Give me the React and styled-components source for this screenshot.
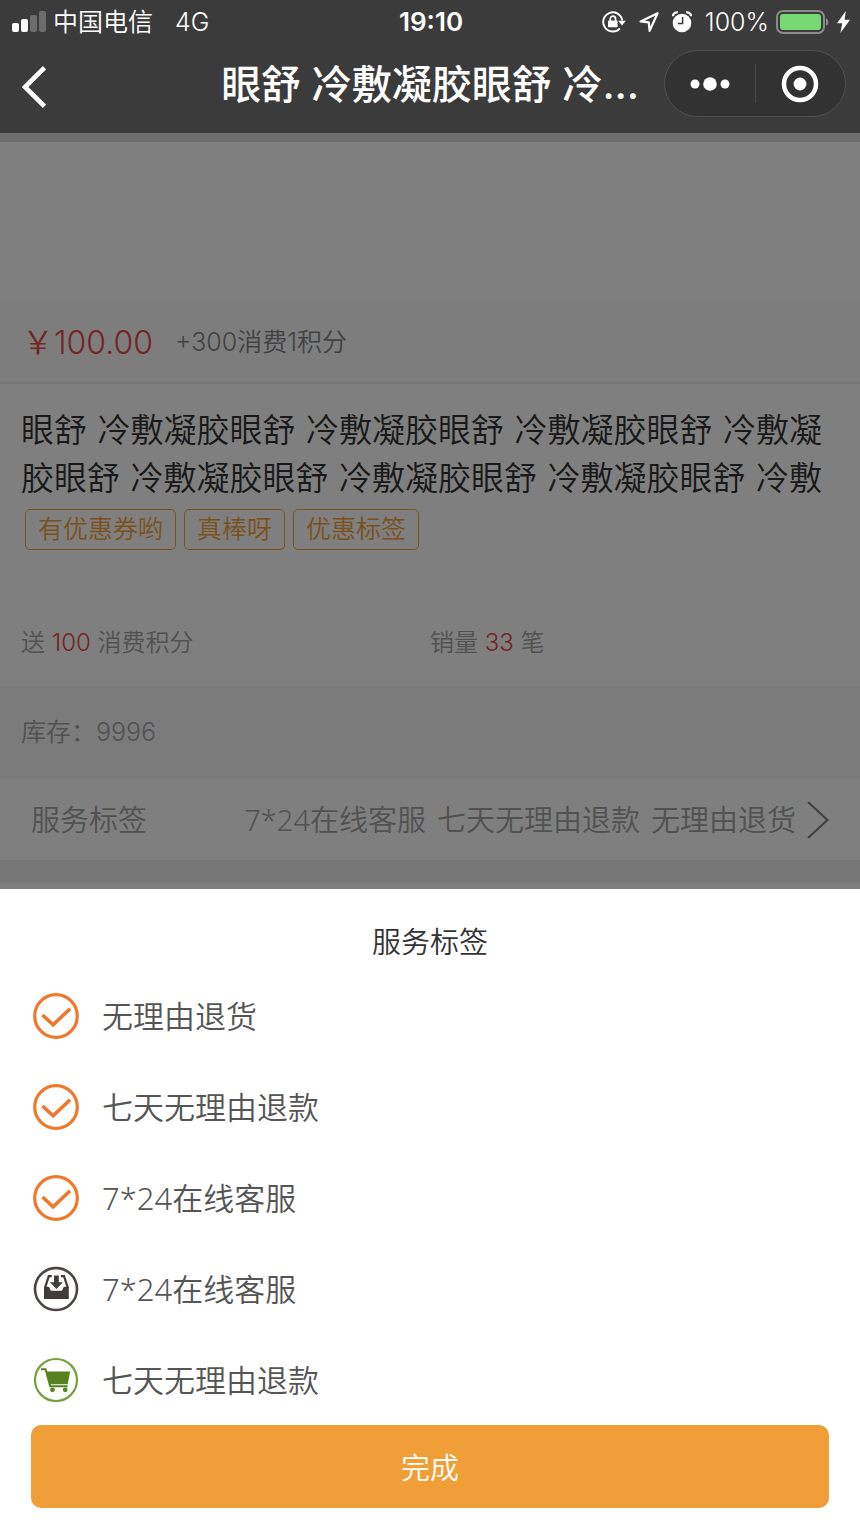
import React, { useState } from "react";
import styled, { createGlobalStyle } from "styled-components";

const productName = "眼舒 冷敷凝胶眼舒 冷敷凝胶眼舒 冷敷凝胶眼舒 冷敷凝胶眼舒 冷敷凝胶眼舒 冷敷凝胶眼舒 冷敷凝胶眼舒 冷敷";
const tags = ["有优惠券哟", "真棒呀", "优惠标签"];
const services = [
  { id: 1, icon: "check", text: "无理由退货" },
  { id: 2, icon: "check", text: "七天无理由退款" },
  { id: 3, icon: "check", text: "7*24在线客服" },
  { id: 4, icon: "inbox", text: "7*24在线客服" },
  { id: 5, icon: "cart", text: "七天无理由退款" },
];

const SignalIcon = () => (
  <svg width="34" height="22" viewBox="0 0 34 22" fill="#fff">
    <rect x="0" y="12" width="7" height="9" rx="2" />
    <rect x="9" y="8" width="7" height="13" rx="2" />
    <rect x="18" y="4" width="7" height="17" rx="2" opacity="0.25" />
    <rect x="27" y="0" width="7" height="21" rx="2" opacity="0.25" />
  </svg>
);

const LockIcon = () => (
  <svg width="24" height="22" viewBox="0 0 24 22" fill="none">
    <path d="M20.3 9.5A9.6 9.6 0 1 0 18 17.3" stroke="#fff" strokeWidth="1.9" />
    <path d="M16.2 9.8h7.6l-3.8 4.600z" fill="#fff" />
    <rect x="6" y="9.6" width="9.6" height="6.6" rx="0.8" fill="#fff" />
    <path d="M8.200 10V7.900a2.700 2.700 0 0 1 5.400 0V10" stroke="#fff" strokeWidth="1.7" />
  </svg>
);

const LocationIcon = () => (
  <svg width="20" height="20" viewBox="0 0 20 20" fill="none">
    <path
      d="M18.600 1.200L1.600 9.400l8.200 1 .8 8.400z"
      stroke="#fff"
      strokeWidth="2.200"
      strokeLinejoin="round"
    />
  </svg>
);

const AlarmIcon = () => (
  <svg width="20" height="22" viewBox="0 0 20 22">
    <circle cx="10" cy="12" r="9.3" fill="#fff" />
    <path
      d="M0.900 5.200A4 4 0 0 1 5.800 1.400M19.100 5.200A4 4 0 0 0 14.200 1.400"
      stroke="#fff"
      strokeWidth="2.200"
      fill="none"
    />
    <path d="M10.600 6v6.600H5.800" stroke="#3b3b3b" strokeWidth="1.500" fill="none" />
  </svg>
);

const BatteryIcon = () => (
  <svg width="54" height="24" viewBox="0 0 54 24">
    <rect x="1" y="1" width="47" height="22" rx="6" fill="none" stroke="#8b8b8b" strokeWidth="2" />
    <rect x="4" y="4" width="41" height="16" rx="3" fill="#78d873" />
    <path d="M50 8.200c3 1 3 6.600 0 7.600z" fill="#8b8b8b" />
  </svg>
);

const BoltIcon = () => (
  <svg width="13" height="22" viewBox="0 0 13 22" fill="#fff">
    <path d="M8.800 0L0 12.200h5.200L3.400 22 13 8.800H7.600z" />
  </svg>
);

const CheckIcon = () => (
  <svg width="46" height="46" viewBox="0 0 46 46" fill="none" stroke="#f0782c">
    <circle cx="23" cy="23" r="21.300" strokeWidth="3.200" />
    <path d="M9.500 22l10.600 9.800 17-16" strokeWidth="3.600" />
  </svg>
);

const InboxIcon = () => (
  <svg width="46" height="46" viewBox="0 0 46 46" fill="none">
    <circle cx="23" cy="23" r="21" stroke="#4b4442" strokeWidth="2.600" />
    <path
      d="M12 21.800L15.800 10.200h3M34.800 21.800L31 10.200h-3"
      stroke="#413b39"
      strokeWidth="2.200"
    />
    <path
      d="M11 20.800h4.200c1 0 1.300 1.200 2 2.600.5 1 1 1.400 2 1.400h8.400c1 0 1.500-.4 2-1.400.7-1.400 1-2.600 2-2.600h4.200V33H11z"
      fill="#413b39"
    />
    <path d="M21 9.500h4.800v6.700h4L23.400 23 17 16.200h4z" fill="#413b39" />
  </svg>
);

const CartIcon = () => (
  <svg width="46" height="46" viewBox="0 0 46 46" fill="none">
    <circle cx="23" cy="23" r="21" stroke="#76a03b" strokeWidth="2.200" />
    <path d="M8 12.200h4.600l4.600 17h17.400" stroke="#55821f" strokeWidth="2" />
    <path d="M13.400 14.400h23.800l-2.600 12.800H17z" fill="#55821f" />
    <circle cx="19.500" cy="32.800" r="2.400" fill="#55821f" />
    <circle cx="32.200" cy="32.800" r="2.400" fill="#55821f" />
  </svg>
);

const serviceIcons = { check: CheckIcon, inbox: InboxIcon, cart: CartIcon };

const App = () => {
  const [open, setOpen] = useState(true);

  return (
    <Page>
      <GlobalStyle />
      <Header>
        <StatusBar>
          <StatusGroup>
            <SignalIcon />
            <span>中国电信</span>
            <Network>4G</Network>
          </StatusGroup>
          <Time>19:10</Time>
          <StatusGroup $end>
            <LockIcon />
            <LocationIcon />
            <AlarmIcon />
            <Battery>
              <span>100%</span>
              <BatteryIcon />
              <BoltIcon />
            </Battery>
          </StatusGroup>
        </StatusBar>
        <NavBar>
          <BackButton aria-label="返回">
            <svg width="24" height="42" viewBox="0 0 24 42" fill="none">
              <path d="M22.500 1.700L3 21l19.500 19.300" stroke="#fff" strokeWidth="4.600" />
            </svg>
          </BackButton>
          <NavTitle>眼舒 冷敷凝胶眼舒 冷…</NavTitle>
          <Capsule>
            <CapsuleButton aria-label="更多">
              <svg width="40" height="14" viewBox="0 0 40 14" fill="#fff">
                <circle cx="5" cy="7" r="4.500" />
                <circle cx="20" cy="7" r="6.800" />
                <circle cx="35" cy="7" r="4.500" />
              </svg>
            </CapsuleButton>
            <CapsuleButton aria-label="关闭">
              <svg width="38" height="38" viewBox="0 0 38 38">
                <circle cx="19" cy="19" r="16" fill="none" stroke="#fff" strokeWidth="4.500" />
                <circle cx="19" cy="19" r="6.400" fill="#fff" />
              </svg>
            </CapsuleButton>
          </Capsule>
        </NavBar>
      </Header>

      <Product $dimmed={open}>
        <Divider />
        <Gallery />
        <PriceRow>
          <Price>￥100.00</Price>
          <PriceNote>+300消费1积分</PriceNote>
        </PriceRow>
        <Info>
          <ProductName>{productName}</ProductName>
          <TagList>
            {tags.map((tag) => (
              <Tag key={tag}>{tag}</Tag>
            ))}
          </TagList>
          <Stats>
            <span>
              送 <em>100</em> 消费积分
            </span>
            <span>
              销量 <em>33</em> 笔
            </span>
          </Stats>
        </Info>
        <Stock>库存：9996</Stock>
        <ServiceRow onClick={() => setOpen(true)}>
          <span>服务标签</span>
          <ServiceSummary>
            <span>7*24在线客服</span>
            <span>七天无理由退款</span>
            <span>无理由退货</span>
            <svg width="22" height="38" viewBox="0 0 22 38" fill="none">
              <path d="M1 1l19.500 18L1 37" stroke="#808080" strokeWidth="2.200" />
            </svg>
          </ServiceSummary>
        </ServiceRow>
        <Gap />
      </Product>

      {open && (
        <Sheet>
          <SheetTitle>服务标签</SheetTitle>
          <ServiceList>
            {services.map(({ id, icon, text }) => {
              const Icon = serviceIcons[icon];
              return (
                <ServiceItem key={id}>
                  <Icon />
                  {text}
                </ServiceItem>
              );
            })}
          </ServiceList>
          <DoneButton onClick={() => setOpen(false)}>完成</DoneButton>
        </Sheet>
      )}
    </Page>
  );
};

const GlobalStyle = createGlobalStyle`
  * {
    box-sizing: border-box;
    margin: 0;
    padding: 0;
  }
  body {
    background: #fff;
    font-family: Inter, "Noto Sans CJK SC", sans-serif;
    font-weight: 350;
  }
  button {
    border: none;
    background: none;
    font: inherit;
    color: inherit;
    cursor: pointer;
  }
  svg {
    display: block;
    flex-shrink: 0;
  }
`;

const Page = styled.div`
  min-height: 100vh;
  display: flex;
  flex-direction: column;
`;

const Header = styled.header`
  height: 133px;
  background: #3b3b3b;
  color: #fff;
`;

const StatusBar = styled.div`
  display: grid;
  grid-template-columns: 1fr auto 1fr;
  align-items: center;
  height: 42px;
  padding: 0 10px 0 12px;
  font-size: 25px;
  line-height: 42px;
  span {
    padding-top: 1px;
  }
`;

const StatusGroup = styled.div`
  display: flex;
  align-items: center;
  justify-content: ${({ $end }) => ($end ? "flex-end" : "flex-start")};
  gap: ${({ $end }) => ($end ? "13px" : "7px")};
`;

const Network = styled.span`
  margin-left: 15px;
`;

const Time = styled.span`
  font-size: 26px;
  font-weight: 600;
`;

const Battery = styled.div`
  display: flex;
  align-items: center;
  gap: 7px;
`;

const NavBar = styled.nav`
  display: grid;
  grid-template-columns: 196px 1fr 196px;
  align-items: center;
  height: 83px;
`;

const BackButton = styled.button`
  justify-self: start;
  padding: 6px 22px 0;
`;

const NavTitle = styled.h1`
  padding-top: 2px;
  font-size: 40px;
  line-height: 60px;
  font-weight: 500;
  text-align: center;
  white-space: nowrap;
`;

const Capsule = styled.div`
  display: flex;
  width: 182px;
  height: 67px;
  padding: 13px 0;
  border: 1px solid #505050;
  border-radius: 34px;
  background: #323232;
`;

const CapsuleButton = styled.button`
  flex: 1;
  display: flex;
  align-items: center;
  justify-content: center;
  & + & {
    border-left: 1px solid #484848;
  }
`;

const Product = styled.main`
  position: relative;
  flex: 1;
  color: #a3a3a3;
  &::after {
    content: "";
    display: ${({ $dimmed }) => ($dimmed ? "block" : "none")};
    position: absolute;
    inset: 0;
    background: rgba(0, 0, 0, 0.5);
  }
`;

const Divider = styled.div`
  height: 9px;
  background: #dadada;
`;

const Gallery = styled.div`
  height: 161px;
`;

const PriceRow = styled.div`
  display: flex;
  align-items: center;
  gap: 22px;
  height: 81px;
  padding: 0 22px 6px;
  border-bottom: 2px solid #ececec;
  background: #fbfbfb;
`;

const Price = styled.strong`
  font-size: 32px;
  font-weight: 350;
  color: #ea4a46;
`;

const PriceNote = styled.span`
  font-size: 25px;
  color: #858585;
`;

const Info = styled.section`
  padding: 23px 21px;
`;

const ProductName = styled.h2`
  font-family: "DejaVu Sans", "Noto Sans CJK SC", sans-serif;
  font-size: 33px;
  line-height: 48px;
  font-weight: 350;
  color: #333;
  display: -webkit-box;
  -webkit-box-orient: vertical;
  -webkit-line-clamp: 2;
  overflow: hidden;
`;

const TagList = styled.div`
  display: flex;
  gap: 8px;
  padding: 6px 4px 0;
`;

const Tag = styled.span`
  padding: 0 12px;
  border: 1px solid #f5a33a;
  border-radius: 5px;
  font-size: 25px;
  line-height: 39px;
  color: #f5a33a;
`;

const Stats = styled.div`
  display: grid;
  grid-template-columns: 1fr 1fr;
  margin-top: 73px;
  font-size: 24px;
  line-height: 40px;
  em {
    font-style: normal;
    color: #ea4a46;
  }
`;

const Stock = styled.div`
  padding: 0 21px 1px;
  background: #f6f6f6;
  font-size: 25px;
  line-height: 92px;
`;

const ServiceRow = styled.button`
  display: flex;
  align-items: center;
  justify-content: space-between;
  width: 100%;
  height: 81px;
  padding: 0 31px;
  font-family: "Noto Sans", "Noto Sans CJK SC", sans-serif;
  font-size: 29px;
  line-height: 40px;
`;

const ServiceSummary = styled.span`
  display: flex;
  align-items: center;
  gap: 11px;
`;

const Gap = styled.div`
  height: 23px;
  background: #efefef;
`;

const Sheet = styled.section`
  display: flex;
  flex-direction: column;
  padding: 32px 31px 21px;
  background: #fff;
`;

const SheetTitle = styled.h3`
  font-size: 29px;
  line-height: 44px;
  font-weight: 350;
  text-align: center;
  color: #333;
`;

const ServiceList = styled.ul`
  display: grid;
  gap: 45px;
  padding: 28px 2px 22px;
  list-style: none;
`;

const ServiceItem = styled.li`
  display: flex;
  align-items: center;
  gap: 23px;
  font-family: "Noto Sans", "Noto Sans CJK SC", sans-serif;
  font-size: 31px;
  line-height: 46px;
  color: #555;
`;

const DoneButton = styled.button`
  height: 83px;
  padding-bottom: 2px;
  border-radius: 10px;
  background: #f09f38;
  font-size: 29px;
  color: #fff;
`;

export default App;
